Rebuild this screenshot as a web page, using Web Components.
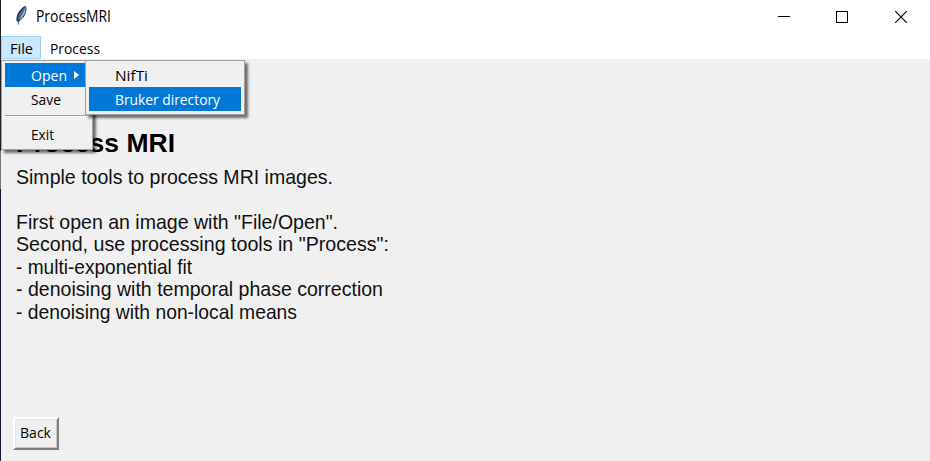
<!DOCTYPE html>
<html lang="en"><head><meta charset="utf-8"><title>ProcessMRI</title>
<style>html,body{margin:0;width:930px;height:461px;overflow:hidden;background:#f0f0f0}</style></head>
<body><app-window></app-window>
<script>
// One line of text, set to a given advance width in pixels.
class FitText extends HTMLElement{
  connectedCallback(){
    const r=this.attachShadow({mode:'open'});
    r.innerHTML='<style>:host{display:block;white-space:pre;width:max-content}span{display:inline-block;transform-origin:0 50%}</style><span><slot></slot></span>';
    const s=r.querySelector('span'),w=+this.getAttribute('w');
    if(w){const n=s.offsetWidth?s.getBoundingClientRect().width:w;s.style.transform='scaleX('+(w/n)+')';this.style.width=w+'px';}
  }
}
class TitleBar extends HTMLElement{
  constructor(){super();this.attachShadow({mode:'open'}).innerHTML=`<style>
:host{display:flex;height:36px;background:#fff;color:#000;font:15.4px/20px "Open Sans","Noto Sans",sans-serif}
.f{margin:5px 0 0 13px;width:16px;height:21px}
fit-text{margin:7px 0 0 6px}
.c{margin-left:auto;width:152px;height:36px}svg{display:block}
</style>
<svg class="f" viewBox="0 0 16 21"><path d="M11.600 1.300C8.500 2.500 5 6 3.600 10C2.600 13 2.600 15 3.400 16.600C7.500 15 11.500 10.500 12 4.500Z" fill="#5f93cc" stroke="#3c4148" stroke-width="1"/><path d="M10.500 2C6.500 5 3.800 10 3.600 15.500" fill="none" stroke="#2a3038" stroke-width="1.300"/><path d="M11 5.500C9.500 9.500 7.500 12 5.600 14" fill="none" stroke="#8fbcec" stroke-width="1.400"/><path d="M9.500 5L5 14L4.500 19.500" fill="none" stroke="#2b2b2b" stroke-width=".8"/></svg>
<fit-text w="75">ProcessMRI</fit-text>
<svg class="c" width="152" height="36" fill="none" stroke="#000"><path d="M0 16.500H12M58.500 11.500H69.500V22.500H58.500Z" shape-rendering="crispEdges"/><path d="M117.200 11.200L128.800 22.800M128.800 11.200L117.200 22.800" stroke-width="1.100"/></svg>`}
}
class MenuBar extends HTMLElement{
  constructor(){super();this.attachShadow({mode:'open'}).innerHTML=`<style>
:host{display:flex;height:23px;background:#fff}
div{box-sizing:border-box;height:23px;padding:1px 8px 0;border:1px solid transparent}
.on{background:#cce8ff;border-color:#99d1ff;width:40px}
</style><div class="on"><fit-text w="23">File</fit-text></div><div><fit-text w="50">Process</fit-text></div>`}
}
class MenuItem extends HTMLElement{
  constructor(){super();this.attachShadow({mode:'open'}).innerHTML=`<style>
:host{display:flex;height:24px;box-sizing:border-box;padding:2px 0 0 26px;color:#000}
:host([active]){background:#0078d7;color:#fff}
i{display:none}:host([sub]) i{display:block;margin:6px 0 0 7px;width:0;height:0;border:4px solid transparent;border-left:5px solid #fff;border-right:0}
</style><slot></slot><i></i>`}
}
class PopupMenu extends HTMLElement{
  constructor(){super();this.attachShadow({mode:'open'}).innerHTML=`<style>
:host{display:block;position:absolute;box-sizing:border-box;background:#f0f0f0;border:1px solid #a0a0a0;padding:2px 3px;box-shadow:2.5px 2.5px 2.5px rgba(0,0,0,.55)}
</style><slot></slot>`}
}
class PushButton extends HTMLElement{
  constructor(){super();this.attachShadow({mode:'open'}).innerHTML=`<style>
:host{display:block;box-sizing:border-box;width:46px;height:33px;border:2px solid;border-color:#fff #808080 #808080 #fff;background:#f0f0f0;padding:3px 0 0 5px;box-shadow:inset 1px 1px #e6e6e6,inset -1px -1px #c8c8c8}
</style><slot></slot>`}
}
class AppWindow extends HTMLElement{
  constructor(){super();this.attachShadow({mode:'open'}).innerHTML=`<style>
:host{display:flex;flex-direction:column;position:relative;width:930px;height:461px;box-sizing:border-box;padding-left:1px;
background:linear-gradient(#222 0 151px,#777 151px 189px,#10182d 189px) 0 0/1px 100% no-repeat,#f0f0f0;color:#000;font:15px/20px "Open Sans","Noto Sans",sans-serif}
main{display:flex;flex-direction:column;flex:1;padding:69px 0 0 15px;color:#111;font:20.6px/22.5px "Liberation Sans",Arial,sans-serif}
h1{margin:0 0 7.9px;color:#000;font:bold 26.67px/30px "Liberation Sans",Arial,sans-serif}
.gap{height:22.5px}
push-button{margin:auto 0 11px -3px;color:#000;font:15px/20px "Open Sans","Noto Sans",sans-serif}
.m1{left:1px;top:60px;width:92px;height:90px}
.m2{left:85px;top:60px;width:160px;height:55px}
hr{border:0;border-top:1px solid #a0a0a0;border-bottom:1px solid #fff;margin:4px 2px 5px 0}
</style>
<title-bar></title-bar><menu-bar></menu-bar>
<main><h1><fit-text w="159">Process MRI</fit-text></h1>
<fit-text w="317">Simple tools to process MRI images.</fit-text><div class="gap"></div>
<fit-text w="322">First open an image with "File/Open".</fit-text>
<fit-text w="373">Second, use processing tools in "Process":</fit-text>
<fit-text w="176">- multi-exponential fit</fit-text>
<fit-text w="367">- denoising with temporal phase correction</fit-text>
<fit-text w="281">- denoising with non-local means</fit-text>
<push-button><fit-text w="31">Back</fit-text></push-button></main>
<popup-menu class="m1"><menu-item active sub><fit-text w="36">Open</fit-text></menu-item><menu-item><fit-text w="30">Save</fit-text></menu-item><hr><menu-item><fit-text w="23">Exit</fit-text></menu-item></popup-menu>
<popup-menu class="m2"><menu-item><fit-text w="33">NifTi</fit-text></menu-item><menu-item active><fit-text w="105">Bruker directory</fit-text></menu-item></popup-menu>`}
}
customElements.define('fit-text',FitText);
customElements.define('title-bar',TitleBar);
customElements.define('menu-bar',MenuBar);
customElements.define('menu-item',MenuItem);
customElements.define('popup-menu',PopupMenu);
customElements.define('push-button',PushButton);
customElements.define('app-window',AppWindow);
</script></body></html>
